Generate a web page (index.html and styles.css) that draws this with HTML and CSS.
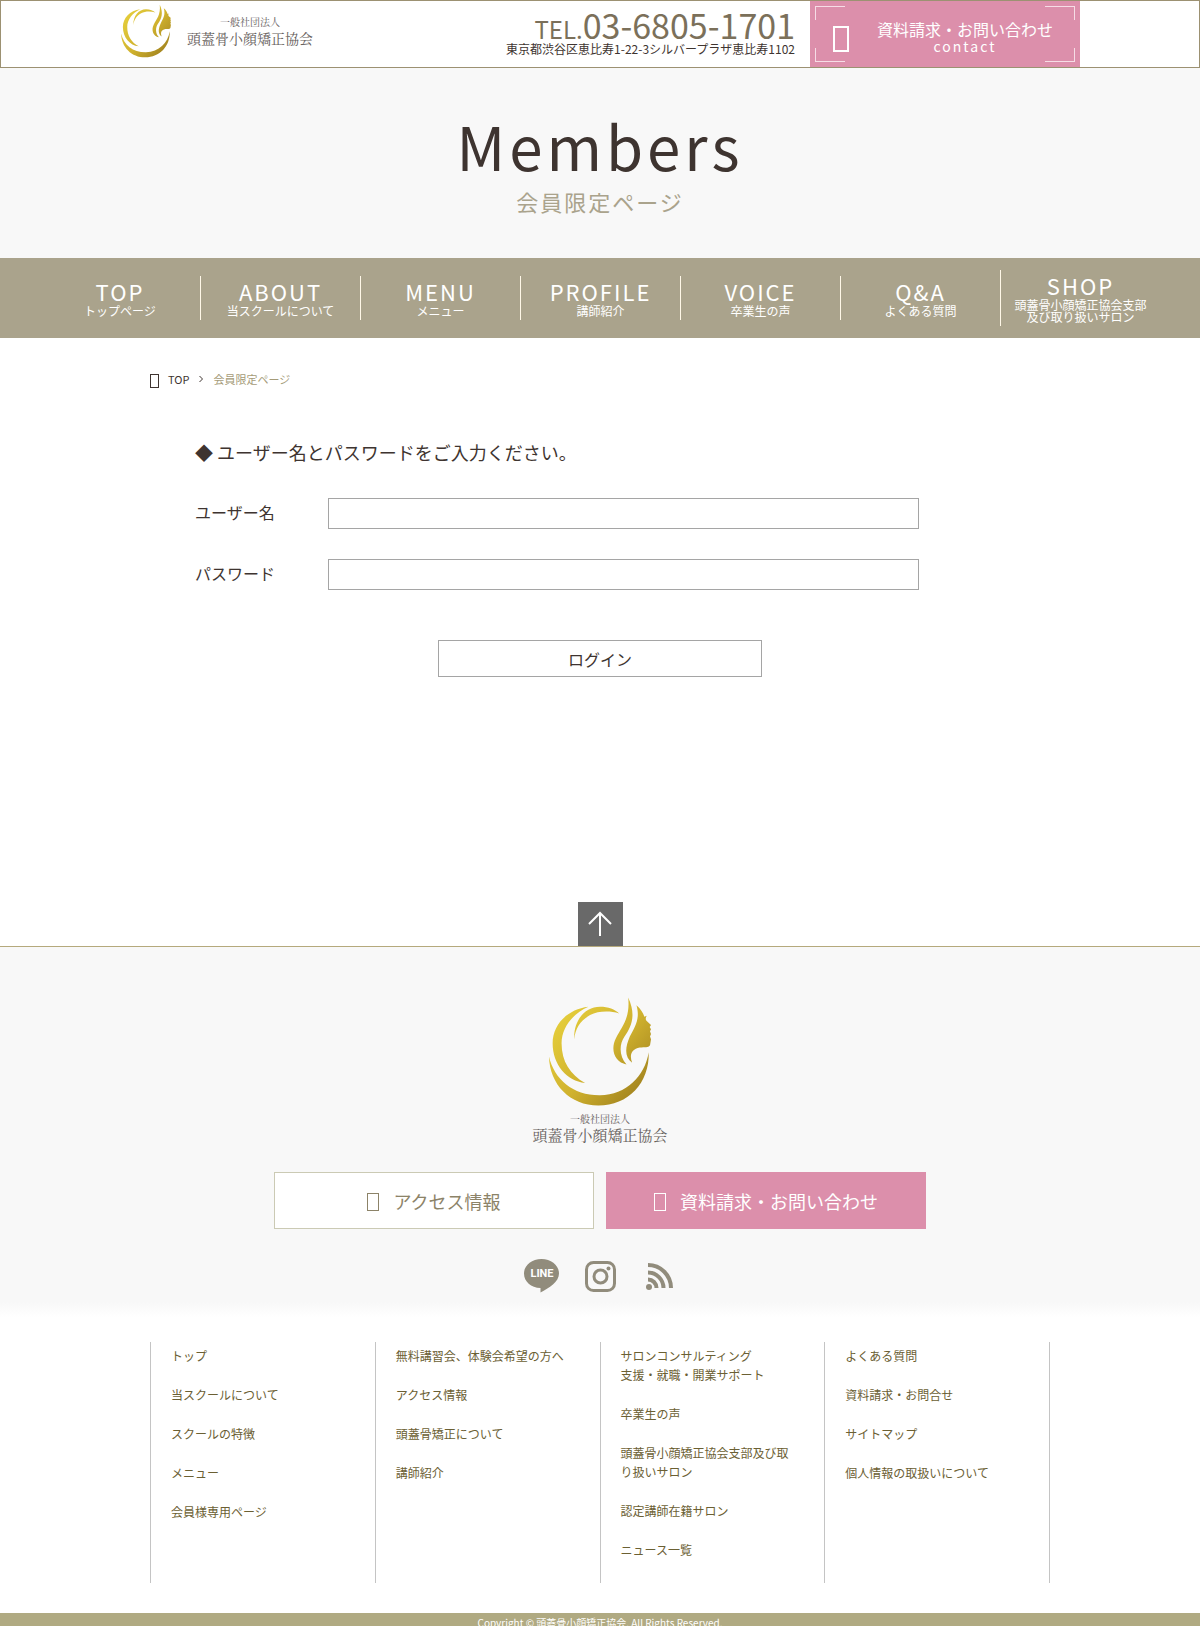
FILE: index.html
```html
<!DOCTYPE html>
<html lang="ja">
<head>
  <meta charset="UTF-8">
  <meta name="viewport" content="width=device-width, initial-scale=1.0">
  <title>会員限定ページ | 頭蓋骨小顔矯正協会</title>
  <link rel="stylesheet" href="styles.css">
</head>
<body>
  <svg class="defs" width="0" height="0" aria-hidden="true">
    <defs>
      <linearGradient id="gold" gradientUnits="userSpaceOnUse" x1="100" y1="380" x2="390" y2="630">
        <stop offset="0" stop-color="#e6cf3c"/>
        <stop offset="0.5" stop-color="#d0b22e"/>
        <stop offset="1" stop-color="#98791c"/>
      </linearGradient>
      <symbol id="mark" viewBox="80 318 320 334">
        <g fill="url(#gold)">
          <path d="M205 350C140 358 97 405 97 460C97 525 140 574 195 580C150 555 124 515 124 460C124 415 155 372 205 350Z"/>
          <path d="M162 448C160 390 195 350 240 350C265 350 285 358 298 370C270 362 235 362 210 375C180 392 166 415 162 448Z"/>
          <path d="M86 500C88 585 150 648 235 648C325 648 390 580 387 487C375 560 320 615 240 617C160 618 102 570 86 500Z"/>
          <path d="M325 322C350 375 335 410 314 440C297 465 298 500 320 524C285 518 270 480 288 445C305 410 332 385 325 322Z"/>
          <path d="M350 345C363 356 370 368 374 380L381 377C377 385 377 389 381 393L394 405L390 411L394 418L391 424L394 432L391 440L394 448L391 466C386 474 375 471 360 473C335 478 328 495 337 519C314 502 315 475 330 440C346 410 362 385 350 345Z"/>
        </g>
      </symbol>
    </defs>
  </svg>

  <header class="header">
    <div class="header-inner">
      <a href="#" class="logo">
        <svg class="logo-mark"><use href="#mark"/></svg>
        <span class="logo-text">
          <span class="logo-small">一般社団法人</span>
          <span class="logo-name">頭蓋骨小顔矯正協会</span>
        </span>
      </a>
      <div class="header-tel">
        <p class="tel"><small>TEL.</small>03-6805-1701</p>
        <p class="address">東京都渋谷区恵比寿1-22-3シルバープラザ恵比寿1102</p>
      </div>
      <a href="#" class="header-contact">
        <span class="corners"></span>
        <span class="icon icon-lg"></span>
        <span class="contact-text">資料請求・お問い合わせ<span class="contact-en">contact</span></span>
      </a>
    </div>
  </header>

  <div class="page-title">
    <h1>Members</h1>
    <p>会員限定ページ</p>
  </div>

  <nav class="gnav">
    <ul>
      <li><a href="#"><span>TOP</span>トップページ</a></li>
      <li><a href="#"><span>ABOUT</span>当スクールについて</a></li>
      <li><a href="#"><span>MENU</span>メニュー</a></li>
      <li><a href="#"><span>PROFILE</span>講師紹介</a></li>
      <li><a href="#"><span>VOICE</span>卒業生の声</a></li>
      <li><a href="#"><span>Q&amp;A</span>よくある質問</a></li>
      <li><a href="#"><span>SHOP</span>頭蓋骨小顔矯正協会支部<br>及び取り扱いサロン</a></li>
    </ul>
  </nav>

  <main class="main">
    <div class="breadcrumb">
      <span class="icon icon-sm"></span>
      <a href="#">TOP</a>
      <svg class="chevron" viewBox="0 0 4 8"><path d="M0.5 1L3.5 4L0.5 7"/></svg>
      <span class="current">会員限定ページ</span>
    </div>

    <form class="login">
      <h2>◆ ユーザー名とパスワードをご入力ください。</h2>
      <div class="form-row">
        <label for="user">ユーザー名</label>
        <input type="text" id="user">
      </div>
      <div class="form-row">
        <label for="pass">パスワード</label>
        <input type="password" id="pass">
      </div>
      <button type="button">ログイン</button>
    </form>
  </main>

  <footer>
    <a href="#" class="pagetop" aria-label="ページトップへ">
      <svg viewBox="0 0 45 45"><path d="M22 34V11M11 22L22 11L33 22"/></svg>
    </a>

    <div class="footer-top">
      <a href="#" class="footer-logo">
        <svg class="footer-mark"><use href="#mark"/></svg>
        <span class="logo-small">一般社団法人</span>
        <span class="logo-name">頭蓋骨小顔矯正協会</span>
      </a>
      <div class="footer-btns">
        <a href="#" class="btn"><span class="icon icon-md"></span>アクセス情報</a>
        <a href="#" class="btn btn-pink"><span class="icon icon-md"></span>資料請求・お問い合わせ</a>
      </div>
      <div class="sns">
        <a href="#" aria-label="LINE">
          <svg width="35" height="34" viewBox="0 0 35 34">
            <path class="fill" d="M17.5 0C27.5 0 35 6.5 35 14.5C35 23 25 29 16.5 33.5V29C7 29 0 22.5 0 14.5C0 6.5 7.5 0 17.5 0Z"/>
            <text x="18" y="18" text-anchor="middle">LINE</text>
          </svg>
        </a>
        <a href="#" aria-label="Instagram">
          <svg width="31" height="31" viewBox="0 0 31 31">
            <rect class="stroke" x="1.5" y="1.5" width="28" height="28" rx="7"/>
            <circle class="stroke" cx="15.5" cy="15.5" r="6.5"/>
            <circle class="fill" cx="23.5" cy="7.5" r="2"/>
          </svg>
        </a>
        <a href="#" aria-label="RSS">
          <svg width="27" height="27" viewBox="0 0 27 27">
            <circle class="fill" cx="3" cy="24" r="3"/>
            <path class="stroke rss" d="M2 2A23 23 0 0 1 25 25M2 9.5A15.5 15.5 0 0 1 17.5 25M2 16.5A8.5 8.5 0 0 1 10.5 25"/>
          </svg>
        </a>
      </div>
    </div>

    <div class="footer-nav">
      <ul>
        <li><a href="#">トップ</a></li>
        <li><a href="#">当スクールについて</a></li>
        <li><a href="#">スクールの特徴</a></li>
        <li><a href="#">メニュー</a></li>
        <li><a href="#">会員様専用ページ</a></li>
      </ul>
      <ul>
        <li><a href="#">無料講習会、体験会希望の方へ</a></li>
        <li><a href="#">アクセス情報</a></li>
        <li><a href="#">頭蓋骨矯正について</a></li>
        <li><a href="#">講師紹介</a></li>
      </ul>
      <ul>
        <li><a href="#">サロンコンサルティング<br>支援・就職・開業サポート</a></li>
        <li><a href="#">卒業生の声</a></li>
        <li><a href="#">頭蓋骨小顔矯正協会支部及び取<br>り扱いサロン</a></li>
        <li><a href="#">認定講師在籍サロン</a></li>
        <li><a href="#">ニュース一覧</a></li>
      </ul>
      <ul>
        <li><a href="#">よくある質問</a></li>
        <li><a href="#">資料請求・お問合せ</a></li>
        <li><a href="#">サイトマップ</a></li>
        <li><a href="#">個人情報の取扱いについて</a></li>
      </ul>
    </div>

    <p class="copyright">Copyright © 頭蓋骨小顔矯正協会. All Rights Reserved.</p>
  </footer>
</body>
</html>
```
FILE: styles.css
```css
* {
  margin: 0;
  padding: 0;
  box-sizing: border-box;
}

body {
  font-family: "Noto Sans CJK JP", sans-serif;
  font-size: 16px;
  color: #3e3430;
  background-color: #fff;
}

a {
  color: inherit;
  text-decoration: none;
}

ul {
  list-style: none;
}

svg {
  display: block;
}

.defs {
  position: absolute;
}

/* icon boxes */
.icon {
  display: block;
  flex: none;
  border: 1px solid currentColor;
}

.icon-sm {
  width: 9px;
  height: 14px;
  margin-top: 3px;
}

.icon-md {
  width: 12px;
  height: 18px;
}

.icon-lg {
  width: 16px;
  height: 26px;
  border-width: 2px;
}

/* header */
.header {
  border: 1px solid #9c9172;
}

.header-inner {
  max-width: 960px;
  height: 66px;
  margin: 0 auto;
  display: flex;
}

.logo {
  display: flex;
  padding-top: 3px;
}

.logo-mark {
  width: 52px;
  height: 54px;
}

.logo-text {
  padding: 11px 0 0 15px;
}

.logo-small,
.logo-name {
  display: block;
  font-family: "Noto Serif CJK JP", "Noto Sans CJK JP", serif;
  text-align: center;
  color: #66605c;
}

.logo-small {
  font-size: 10px;
  line-height: 14px;
}

.logo-name {
  font-size: 14px;
  line-height: 18px;
}

.header-tel {
  margin-left: auto;
  padding: 7px 15px 0 0;
  text-align: right;
}

.tel {
  font-size: 34px;
  line-height: 34px;
  color: #7b705a;
}

.tel small {
  font-size: 24px;
}

.address {
  font-size: 12px;
  line-height: 12px;
  margin-top: -3px;
}

.header-contact {
  position: relative;
  width: 270px;
  display: flex;
  align-items: center;
  background-color: #dc8fab;
  color: #fff;
  padding-left: 23px;
}

.header-contact .icon {
  margin-top: 10px;
}

.corners {
  position: absolute;
  inset: 5px;
  --c: linear-gradient(#f6dde6, #f6dde6);
  background: var(--c) 0 0 / 30px 1px, var(--c) 0 0 / 1px 14px,
    var(--c) 100% 0 / 30px 1px, var(--c) 100% 0 / 1px 14px,
    var(--c) 0 100% / 30px 1px, var(--c) 0 100% / 1px 14px,
    var(--c) 100% 100% / 30px 1px, var(--c) 100% 100% / 1px 14px;
  background-repeat: no-repeat;
}

.contact-text {
  margin-left: 28px;
  font-size: 16px;
  line-height: 17px;
  text-align: center;
  margin-top: 8px;
}

.contact-en {
  display: block;
  font-size: 14px;
  letter-spacing: 2px;
}

/* page title */
.page-title {
  height: 190px;
  padding-top: 40px;
  text-align: center;
  background-color: #f8f8f8;
}

.page-title h1 {
  font-size: 60px;
  font-weight: normal;
  line-height: 74px;
  letter-spacing: 4px;
}

.page-title p {
  font-size: 22px;
  line-height: 38px;
  letter-spacing: 2px;
  color: #aaa38c;
}

/* global nav */
.gnav {
  background-color: #aaa38c;
}

.gnav ul {
  max-width: 1120px;
  height: 80px;
  margin: 0 auto;
  display: flex;
  align-items: center;
}

.gnav li {
  width: calc(100% / 7);
  border-left: 1px solid #fff8e8;
}

.gnav li:first-child {
  border-left: 0;
}

.gnav a {
  display: block;
  padding: 1px 0 3px;
  color: #fff;
  font-size: 12px;
  line-height: 12px;
  text-align: center;
  white-space: nowrap;
}

.gnav span {
  display: block;
  font-size: 22px;
  line-height: 28px;
  letter-spacing: 2px;
}

/* main */
.main {
  max-width: 900px;
  min-height: 564px;
  margin: 0 auto;
  padding-top: 32px;
}

.breadcrumb {
  display: flex;
  align-items: center;
  font-size: 11px;
  line-height: 18px;
}

.breadcrumb a {
  margin-left: 9px;
}

.chevron {
  width: 4px;
  height: 8px;
  margin: 0 10px;
  fill: none;
  stroke: #3e3430;
}

.breadcrumb .current {
  color: #a59b78;
}

.login {
  width: 90%;
  margin: 0 auto;
  padding-top: 52px;
}

.login h2 {
  font-size: 18px;
  font-weight: normal;
  line-height: 24px;
  margin-bottom: 34px;
}

.form-row {
  display: flex;
  align-items: center;
  margin-bottom: 30px;
}

.form-row label {
  width: 133px;
  padding-bottom: 4px;
}

.form-row input {
  width: 591px;
  height: 31px;
  padding: 0 8px;
  font: inherit;
  border: 1px solid #a5a5a5;
}

.login button {
  display: block;
  width: 324px;
  height: 37px;
  margin: 50px auto 0;
  font: inherit;
  color: inherit;
  background-color: #fff;
  border: 1px solid #a5a5a5;
}

/* footer */
.pagetop {
  display: block;
  width: 45px;
  margin: 0 auto;
  background-color: #696969;
}

.pagetop path {
  fill: none;
  stroke: #fff;
  stroke-width: 2;
}

.footer-top {
  margin-top: -1px;
  border-top: 1px solid #b5a97c;
  padding: 49px 0 24px;
  background: linear-gradient(#f8f8f8 0, #f8f8f8 96%, #fff);
}

.footer-logo {
  display: block;
  text-align: center;
}

.footer-logo .logo-name {
  font-size: 15px;
}

.footer-mark {
  width: 106px;
  height: 111px;
  margin: 0 auto 5px;
}

.footer-btns {
  display: flex;
  justify-content: center;
  gap: 12px;
  margin-top: 28px;
}

.btn {
  width: 320px;
  height: 57px;
  display: flex;
  align-items: center;
  justify-content: center;
  gap: 14px;
  font-size: 18px;
  color: #8c8368;
  background-color: #fff;
  border: 1px solid #cbcab4;
}

.btn .icon {
  margin-top: 3px;
}

.btn-pink {
  color: #fff;
  background-color: #dc8fab;
  border-color: #dc8fab;
}

.sns {
  display: flex;
  justify-content: center;
  align-items: center;
  gap: 24px;
  margin-top: 30px;
}

.sns a {
  width: 35px;
}

.sns svg {
  margin: 0 auto;
}

.sns .fill {
  fill: #918c7c;
}

.sns .stroke {
  fill: none;
  stroke: #918c7c;
  stroke-width: 3;
}

.sns .rss {
  stroke-width: 4;
}

.sns text {
  font-family: Roboto, sans-serif;
  font-size: 11px;
  font-weight: bold;
  fill: #fff;
}

.footer-nav {
  max-width: 900px;
  margin: 25px auto 30px;
  display: flex;
  border-right: 1px solid #c4c4c4;
}

.footer-nav ul {
  flex: 1;
  min-height: 241px;
  padding: 4px 0 0 20px;
  border-left: 1px solid #c4c4c4;
}

.footer-nav li {
  font-size: 12px;
  line-height: 19px;
  margin-bottom: 20px;
  color: #6b6033;
  white-space: nowrap;
}

.copyright {
  padding-top: 3px;
  font-size: 10px;
  line-height: 14px;
  text-align: center;
  color: #fff;
  background-color: #b0aa82;
}
```
